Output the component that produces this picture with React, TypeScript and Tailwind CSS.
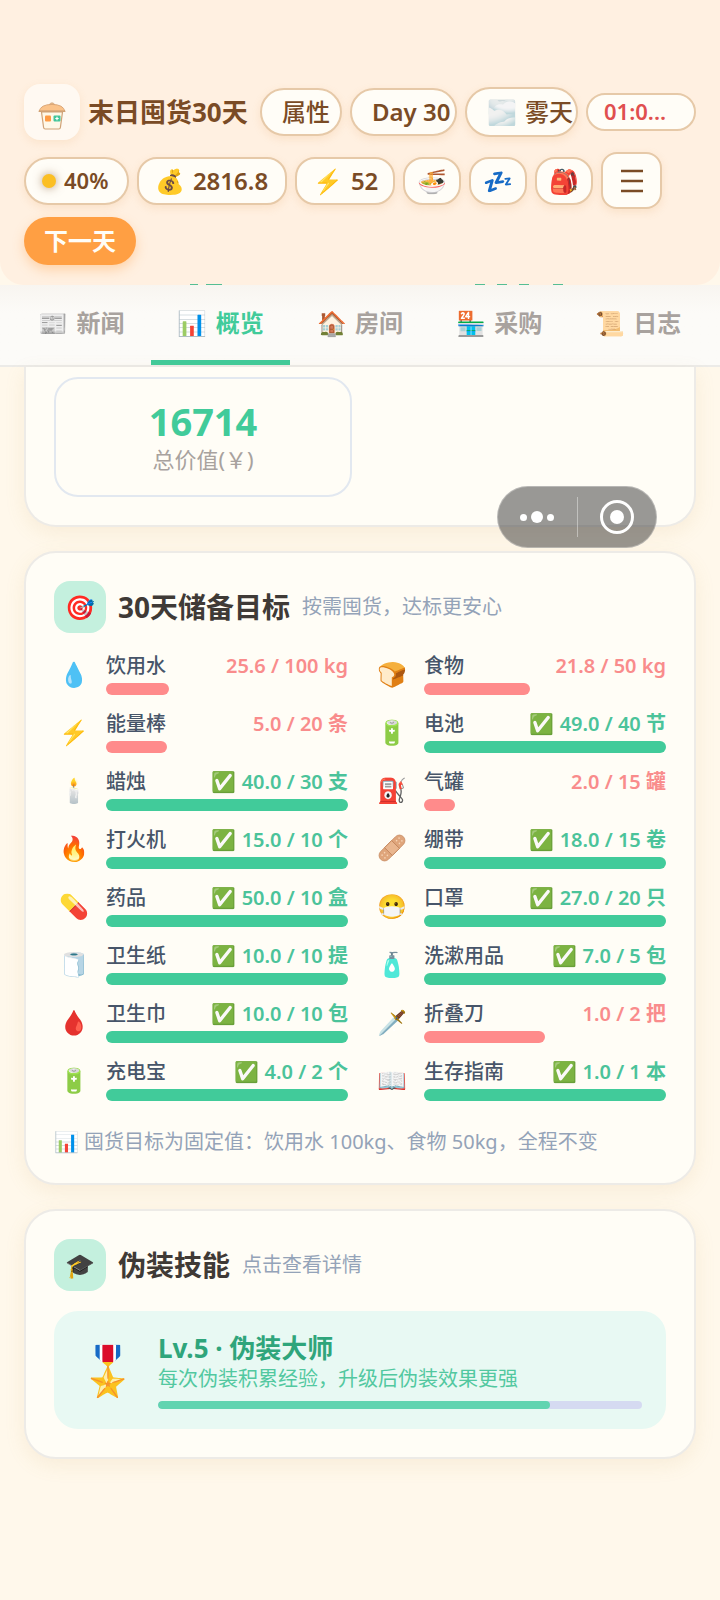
import { ReactNode } from "react";

type Goal = { icon: ReactNode; name: string; have: number; need: number; unit: string; width: number };

function Bandage() {
  return (
    <svg viewBox="0 0 28 28" className="inline-block size-7" aria-hidden="true">
      <g transform="rotate(-45 14 14)">
        <rect x="-2" y="8.500" width="32" height="11" rx="5.500" fill="#dfa57b" stroke="#c98d63" strokeWidth="0.800" />
        <rect x="9" y="8.500" width="10" height="11" fill="#e9b68f" stroke="#bd7f56" strokeWidth="0.800" />
        <g fill="#f6d3b4">
          <circle cx="2" cy="12" r="0.800" />
          <circle cx="5.500" cy="12" r="0.800" />
          <circle cx="2" cy="16" r="0.800" />
          <circle cx="5.500" cy="16" r="0.800" />
          <circle cx="22.500" cy="12" r="0.800" />
          <circle cx="26" cy="12" r="0.800" />
          <circle cx="22.500" cy="16" r="0.800" />
          <circle cx="26" cy="16" r="0.800" />
        </g>
      </g>
    </svg>
  );
}

const goals: Goal[] = [
  { icon: "💧", name: "饮用水", have: 25.6, need: 100, unit: "kg", width: 26 },
  { icon: "🍞", name: "食物", have: 21.8, need: 50, unit: "kg", width: 43.8 },
  { icon: "⚡", name: "能量棒", have: 5, need: 20, unit: "条", width: 25.2 },
  { icon: "🔋", name: "电池", have: 49, need: 40, unit: "节", width: 100 },
  { icon: "🕯️", name: "蜡烛", have: 40, need: 30, unit: "支", width: 100 },
  { icon: "⛽", name: "气罐", have: 2, need: 15, unit: "罐", width: 13 },
  { icon: "🔥", name: "打火机", have: 15, need: 10, unit: "个", width: 100 },
  { icon: <Bandage />, name: "绷带", have: 18, need: 15, unit: "卷", width: 100 },
  { icon: "💊", name: "药品", have: 50, need: 10, unit: "盒", width: 100 },
  { icon: "😷", name: "口罩", have: 27, need: 20, unit: "只", width: 100 },
  { icon: "🧻", name: "卫生纸", have: 10, need: 10, unit: "提", width: 100 },
  { icon: "🧴", name: "洗漱用品", have: 7, need: 5, unit: "包", width: 100 },
  { icon: "🩸", name: "卫生巾", have: 10, need: 10, unit: "包", width: 100 },
  { icon: "🗡️", name: "折叠刀", have: 1, need: 2, unit: "把", width: 50 },
  { icon: "🔋", name: "充电宝", have: 4, need: 2, unit: "个", width: 100 },
  { icon: "📖", name: "生存指南", have: 1, need: 1, unit: "本", width: 100 },
];

const tabs = [
  { icon: "📰", label: "新闻" },
  { icon: "📊", label: "概览" },
  { icon: "🏠", label: "房间" },
  { icon: "🏪", label: "采购" },
  { icon: "📜", label: "日志" },
];

const pill =
  "flex shrink-0 items-center overflow-hidden whitespace-nowrap border-2 border-[#e6c9a8] bg-[#fffdf7] shadow-[0_3px_8px_rgba(230,160,90,0.18)]";

function Logo() {
  return (
    <div className="flex size-14 shrink-0 items-center justify-center rounded-2xl bg-[#fff9f2] shadow-[0_3px_8px_rgba(230,160,90,0.15)]">
      <svg viewBox="0 0 28 28" className="mt-2 size-7" aria-hidden="true">
        <path d="M3.500 10 L5.600 25.500 Q5.800 27 7.200 27 H20.800 Q22.200 27 22.400 25.500 L24.500 10 Z" fill="#fff8e8" stroke="#cfa276" strokeWidth="1.200" />
        <path d="M11 2.800 Q14 -1 17 2.800" fill="#fbc38a" stroke="#cfa276" strokeWidth="1" />
        <path d="M1.200 9.200 Q2.500 2.600 14 2.400 Q25.500 2.600 26.800 9.200 Z" fill="#fbc38a" stroke="#dba676" strokeWidth="1" />
        <path d="M1.200 9.200 H26.800" stroke="#cfa276" strokeWidth="1.400" strokeLinecap="round" />
        <rect x="7" y="13.500" width="6" height="6" rx="1" fill="#ff9b45" />
        <rect x="15.500" y="13.500" width="7" height="6" rx="1" fill="#43c59a" />
        <path d="M19 14.800 v3.400 M17.300 16.500 h3.400" stroke="#fff" strokeWidth="1.200" />
      </svg>
    </div>
  );
}

function Header() {
  return (
    <header className="relative rounded-b-3xl bg-[#fff0e1] px-6 pt-[84px] pb-5 text-2xl font-semibold text-[#7a4b25]">
      <div className="flex h-14 items-center gap-2">
        <Logo />
        <h1 className="w-[164px] shrink-0 whitespace-nowrap text-[26px] font-bold">末日囤货30天</h1>
        <button className={`${pill} h-12 w-[82px] rounded-full pl-5 font-medium`}>属性</button>
        <button className={`${pill} h-12 w-[107px] rounded-full pl-5`}>Day 30</button>
        <button className={`${pill} h-[50px] w-[113px] gap-2 rounded-full pl-5 font-medium`}>
          <span>🌫️</span>
          <span>雾天</span>
        </button>
        <span className="flex h-[38px] min-w-0 flex-1 items-center rounded-full border-2 border-[#e6c9a8] bg-[#fffdf7] px-4 text-[22px] text-[#e04f4f]">
          01:0...
        </span>
      </div>
      <div className="mt-3 flex items-center gap-2">
        <span className={`${pill} h-12 w-[105px] gap-2 rounded-3xl pl-4 text-[22px]`}>
          <i className="size-[14px] rounded-full bg-[#fbbf24] shadow-[0_0_10px_rgba(122,75,37,0.55)]" />
          40%
        </span>
        <span className={`${pill} h-12 w-[150px] gap-2 rounded-[20px] pl-4`}>
          <span>💰</span>2816.8
        </span>
        <span className={`${pill} h-12 w-[100px] gap-2 rounded-[20px] pl-4`}>
          <span>⚡</span>52
        </span>
        <button aria-label="吃饭" className={`${pill} h-12 w-[58px] justify-center rounded-[20px]`}>🍜</button>
        <button aria-label="睡觉" className={`${pill} h-12 w-[58px] justify-center rounded-[20px]`}>💤</button>
        <button aria-label="背包" className={`${pill} h-12 w-[58px] justify-center rounded-[20px]`}>🎒</button>
        <button aria-label="菜单" className={`${pill} h-[57px] w-[61px] justify-center rounded-2xl`}>
          <svg viewBox="0 0 24 24" className="size-6" aria-hidden="true">
            <path d="M1 2h22M1 12h22M1 22h22" stroke="#7a4b25" strokeWidth="2.400" />
          </svg>
        </button>
      </div>
      <button className="mt-2 flex h-12 items-center rounded-full bg-[#ff9f43] px-5 font-bold text-[#fffdf7] shadow-[0_5px_12px_rgba(255,159,67,0.35)]">
        下一天
      </button>
      <svg
        viewBox="0 0 720 1"
        preserveAspectRatio="none"
        className="absolute bottom-0 left-0 h-px w-full"
        aria-hidden="true"
      >
        <path
          d="M190 .5h8M206 .5h16M475 .5h10M497 .5h10M519 .5h10M553 .5h10"
          stroke="#55be93"
          strokeWidth="1"
        />
      </svg>
    </header>
  );
}

function TabBar() {
  return (
    <nav className="flex h-[82px] border-b-2 border-[#ecebe8] bg-linear-to-b from-[#f8f5f0] via-[#fcfbf8] via-35% to-[#fcfbf8] px-3">
      {tabs.map((tab) => {
        const active = tab.label === "概览";
        return (
          <button
            key={tab.label}
            aria-current={active ? "page" : undefined}
            className={`flex flex-1 items-center justify-center gap-2 border-b-[5px] text-2xl font-semibold ${
              active ? "border-[#41cb9a] text-[#41cb9a]" : "border-transparent text-[#a8a29e]"
            }`}
          >
            <span>{tab.icon}</span>
            <span>{tab.label}</span>
          </button>
        );
      })}
    </nav>
  );
}

function Card({ icon, title, hint, children }: { icon: string; title: string; hint: string; children: ReactNode }) {
  return (
    <section className="rounded-[32px] border-2 border-[#edebe7] bg-[#fffdf6] p-7 shadow-[0_6px_20px_rgba(200,160,80,0.12)]">
      <div className="mb-5 flex h-[52px] items-center gap-3">
        <span className="flex size-[52px] items-center justify-center rounded-2xl bg-[#c4f0de] text-2xl">{icon}</span>
        <h2 className="text-[28px] font-bold text-[#3f3a36]">{title}</h2>
        <span className="text-xl text-[#94a3b8]">{hint}</span>
      </div>
      {children}
    </section>
  );
}

function GoalItem({ goal }: { goal: Goal }) {
  const done = goal.have >= goal.need;
  return (
    <li className="flex items-center gap-3">
      <span className="flex h-10 w-10 shrink-0 items-center justify-center text-2xl">{goal.icon}</span>
      <div className="min-w-0 flex-1">
        <div className="mb-1 flex h-[26px] items-center justify-between whitespace-nowrap text-xl font-medium">
          <span className="text-[#475569]">{goal.name}</span>
          <span className={`font-semibold ${done ? "text-[#4bc39a]" : "text-[#f98c8c]"}`}>
            {done ? "✅ " : ""}
            {goal.have.toFixed(1)} / {goal.need} {goal.unit}
          </span>
        </div>
        <div className="h-3">
          <div
            className={`h-full rounded-full ${done ? "bg-[#41cb9a]" : "bg-[#ff8b8b]"}`}
            style={{ width: `${goal.width}%` }}
          />
        </div>
      </div>
    </li>
  );
}

export default function App() {
  return (
    <div className="min-h-screen bg-[#fff8eb] font-['Noto_Sans','Noto_Sans_CJK_SC','Noto_Color_Emoji',sans-serif]">
      <Header />
      <TabBar />
      <main className="flex flex-col gap-6 px-6 pb-8">
        <section className="rounded-b-[32px] border-2 border-t-0 border-[#edebe7] bg-[#fffdf6] px-7 pt-[10px] pb-7 shadow-[0_6px_20px_rgba(200,160,80,0.12)]">
          <div className="grid grid-cols-2 gap-4">
            <div className="flex h-[120px] flex-col items-center justify-center rounded-3xl border-2 border-[#e2e8f0]">
              <strong className="text-[38px] leading-11 font-bold text-[#41cb9a]">16714</strong>
              <span className="text-[22px] leading-8 text-[#a8a29e]">总价值(￥)</span>
            </div>
          </div>
        </section>

        <Card icon="🎯" title="30天储备目标" hint="按需囤货，达标更安心">
          <ul className="grid grid-cols-2 gap-x-6 gap-y-4">
            {goals.map((goal) => (
              <GoalItem key={goal.name} goal={goal} />
            ))}
          </ul>
          <p className="mt-7 text-xl leading-[26px] text-[#94a3b8]">
            📊 囤货目标为固定值：饮用水 100kg、食物 50kg，全程不变
          </p>
        </Card>

        <Card icon="🎓" title="伪装技能" hint="点击查看详情">
          <div className="flex items-center gap-5 rounded-3xl bg-[#e8f9f3] px-6 py-5">
            <span className="flex w-[60px] shrink-0 justify-center text-5xl">🎖️</span>
            <div className="flex-1">
              <h3 className="text-[26px] leading-[34px] font-bold text-[#2fa57b]">Lv.5 · 伪装大师</h3>
              <p className="text-xl leading-7 text-[#52c8a0]">每次伪装积累经验，升级后伪装效果更强</p>
              <div className="mt-2 h-2 overflow-hidden rounded-full bg-[#d5daf1]">
                <div className="h-full w-[81%] rounded-full bg-[#61d4b0]" />
              </div>
            </div>
          </div>
        </Card>
      </main>

      <div className="fixed top-[486px] right-[63px] flex h-[62px] w-40 items-center rounded-full border border-white/30 bg-[#343434]/50">
        <button aria-label="更多" className="flex flex-1 items-center justify-center gap-1">
          <i className="size-[7px] rounded-full bg-white" />
          <i className="size-3 rounded-full bg-white" />
          <i className="size-[7px] rounded-full bg-white" />
        </button>
        <span className="h-10 w-px bg-white/40" />
        <button aria-label="关闭" className="flex flex-1 items-center justify-center">
          <span className="flex size-[34px] items-center justify-center rounded-full border-[3px] border-white">
            <i className="size-[14px] rounded-full bg-white" />
          </span>
        </button>
      </div>
    </div>
  );
}
